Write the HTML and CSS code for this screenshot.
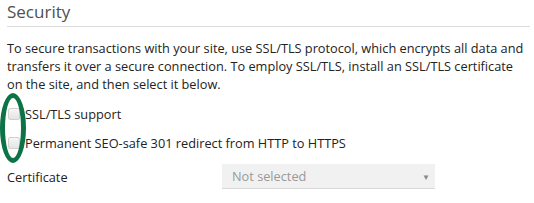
FILE: index.html
```html
<!DOCTYPE html>
<html lang="en">
<head>
    <meta charset="UTF-8">
    <title>Security</title>
    <link rel="stylesheet" href="styles.css">
</head>
<body>
    <div class="section">
        <h2 class="section-title">Security</h2>
        <p class="hint">To secure transactions with your site, use SSL/TLS protocol, which encrypts all data and transfers it over a secure connection. To employ SSL/TLS, install an SSL/TLS certificate on the site, and then select it below.</p>
        <div class="checks">
            <label class="check-row"><span class="box"></span>SSL/TLS support</label>
            <label class="check-row"><span class="box"></span>Permanent SEO-safe 301 redirect from HTTP to HTTPS</label>
            <span class="marker"></span>
        </div>
        <div class="field">
            <span class="field-label">Certificate</span>
            <div class="select">
                <span>Not selected</span>
                <span class="arrow">&#9660;</span>
            </div>
        </div>
    </div>
</body>
</html>
```

FILE: styles.css
```css
body {
    margin: 0;
    font-family: "Open Sans", sans-serif;
    font-size: 12.75px;
    color: #222;
    background: #fff;
}
.section {
    padding: 0 4px 0 7px;
}
.section-title {
    margin: 0;
    padding: 1px 0 3px;
    font-size: 17px;
    font-weight: normal;
    color: #505050;
    line-height: 22px;
    border-bottom: 1px solid #ddd;
}
.hint {
    margin: 12px 0 0;
    padding-right: 4px;
    line-height: 18px;
}
.checks {
    position: relative;
    margin-top: 6px;
}
.check-row {
    display: flex;
    align-items: center;
    height: 29px;
    margin-left: 1px;
}
.box {
    width: 10px;
    height: 10px;
    margin-right: 5px;
    border: 1px solid #d0d0d0;
    border-radius: 2px;
    background: linear-gradient(#f6f6f6, #e4e4e4);
}
.marker {
    position: absolute;
    left: -7px;
    top: -6px;
    width: 16px;
    height: 60px;
    border: 5px solid #0b7346;
    border-radius: 50%;
}
.field {
    display: flex;
    align-items: center;
    margin-top: 7px;
}
.field-label {
    width: 215px;
}
.select {
    display: flex;
    justify-content: space-between;
    align-items: center;
    width: 198px;
    height: 24px;
    padding: 0 5px 0 10px;
    background: #f1f1f1;
    border-bottom: 1px solid #d8d8d8;
    color: #999;
}
.arrow {
    font-size: 8px;
    color: #888;
}
```
